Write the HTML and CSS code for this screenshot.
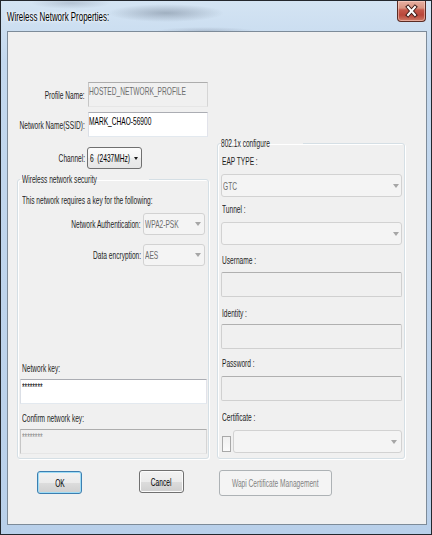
FILE: index.html
```html
<!DOCTYPE html>
<html>
<head>
<meta charset="utf-8">
<title>Wireless Network Properties</title>
<link rel="stylesheet" href="styles.css">
</head>
<body>
<div class="window">
  <div class="titlebar">
    <div class="title"><span class="t">Wireless Network Properties:</span></div>
    <div class="close">
      <svg width="27" height="20" viewBox="0 0 27 20">
        <path d="M10 6 L17 14 M17 6 L10 14" stroke="#3a1a16" stroke-width="4" stroke-linecap="square" fill="none"/>
        <path d="M10 6 L17 14 M17 6 L10 14" stroke="#ffffff" stroke-width="2" stroke-linecap="square" fill="none"/>
      </svg>
    </div>
  </div>
  <div class="client">
    <div class="main">
      <div class="leftcol">
        <div class="row row-profile">
          <div class="lbl"><span class="t">Profile Name:</span></div>
          <div class="edit edit-disabled field-top"><span class="t">HOSTED_NETWORK_PROFILE</span></div>
        </div>
        <div class="row row-ssid">
          <div class="lbl"><span class="t">Network Name(SSID):</span></div>
          <div class="edit field-top"><span class="t">MARK_CHAO-56900</span></div>
        </div>
        <div class="row row-channel">
          <div class="lbl"><span class="t">Channel:</span></div>
          <div class="combo combo-channel"><span class="t">6&nbsp;&nbsp;(2437MHz)</span><span class="arrow"></span></div>
        </div>
        <fieldset class="group group-sec">
          <legend><span class="t">Wireless network security</span></legend>
          <div class="note"><span class="t">This network requires a key for the following:</span></div>
          <div class="row row-auth">
            <div class="lbl lbl-wide"><span class="t">Network Authentication:</span></div>
            <div class="combo combo-disabled combo-small"><span class="t">WPA2-PSK</span><span class="arrow"></span></div>
          </div>
          <div class="row row-enc">
            <div class="lbl lbl-wide"><span class="t">Data encryption:</span></div>
            <div class="combo combo-disabled combo-small"><span class="t">AES</span><span class="arrow"></span></div>
          </div>
          <div class="text-lbl key-lbl"><span class="t">Network key:</span></div>
          <div class="edit key-edit"><span class="t">********</span></div>
          <div class="text-lbl confirm-lbl"><span class="t">Confirm network key:</span></div>
          <div class="edit edit-disabled key-edit confirm-edit"><span class="t">********</span></div>
        </fieldset>
      </div>
      <div class="rightcol">
        <fieldset class="group group-8021x">
          <legend><span class="t">802.1x configure</span></legend>
          <div class="text-lbl eap-lbl"><span class="t">EAP TYPE :</span></div>
          <div class="combo combo-disabled combo-wide eap-combo"><span class="t">GTC</span><span class="arrow"></span></div>
          <div class="text-lbl tunnel-lbl"><span class="t">Tunnel :</span></div>
          <div class="combo combo-disabled combo-wide tunnel-combo"><span class="t"></span><span class="arrow"></span></div>
          <div class="text-lbl user-lbl"><span class="t">Username :</span></div>
          <div class="edit edit-disabled r-edit user-edit"></div>
          <div class="text-lbl id-lbl"><span class="t">Identity :</span></div>
          <div class="edit edit-disabled r-edit id-edit"></div>
          <div class="text-lbl pw-lbl"><span class="t">Password :</span></div>
          <div class="edit edit-disabled r-edit pw-edit"></div>
          <div class="text-lbl cert-lbl"><span class="t">Certificate :</span></div>
          <div class="row cert-row">
            <div class="checkbox"></div>
            <div class="combo combo-disabled cert-combo"><span class="t"></span><span class="arrow"></span></div>
          </div>
        </fieldset>
      </div>
    </div>
    <div class="buttons">
      <div class="btn btn-ok"><span class="t">OK</span></div>
      <div class="btn btn-cancel"><span class="t">Cancel</span></div>
      <div class="btn btn-disabled btn-wapi"><span class="t">Wapi Certificate Management</span></div>
    </div>
  </div>
</div>
</body>
</html>
```

FILE: styles.css
```css
* { box-sizing: border-box; }
html, body { margin: 0; padding: 0; }
body {
  width: 432px;
  height: 535px;
  overflow: hidden;
  font-family: "Liberation Sans", Arial, sans-serif;
  font-size: 11px;
  line-height: 12px;
  color: #1e1e1e;
  background: #1c1c1c;
}

.t {
  display: inline-block;
  white-space: nowrap;
  transform: scaleX(0.6);
  transform-origin: 0 50%;
}

.window {
  width: 432px;
  height: 535px;
  border: 1px solid #23272d;
  background: linear-gradient(to bottom, #d4e4f3 0, #c3d8ee 60px, #b9d0ea 100%);
  display: flex;
  flex-direction: column;
}

.titlebar {
  height: 30px;
  flex: none;
  display: flex;
  justify-content: space-between;
  align-items: flex-start;
  background:
    radial-gradient(ellipse 58px 9px at 165px 12px, rgba(70, 82, 100, 0.35), rgba(70, 82, 100, 0) 100%),
    radial-gradient(ellipse 40px 6px at 70px 2px, rgba(90, 100, 120, 0.25), rgba(90, 100, 120, 0) 100%),
    radial-gradient(ellipse 50px 4px at 205px 30px, rgba(90, 100, 120, 0.25), rgba(90, 100, 120, 0) 100%);
}
.title {
  padding: 10px 0 0 6px;
  font-size: 12px;
  line-height: 13px;
  color: #000;
}
.title .t {
  transform: scaleX(0.66);
  text-shadow: 0 0 4px #fff, 0 0 7px #fff;
}
.close {
  width: 29px;
  height: 21px;
  margin-right: 5px;
  border: 1px solid #5a2b23;
  border-top: none;
  border-radius: 0 0 4px 4px;
  background: linear-gradient(to bottom, #e7b0a2 0, #d99583 35%, #c4584a 45%, #b9473a 70%, #cf7a66 100%);
  box-shadow: inset 0 0 0 1px rgba(255, 220, 210, 0.5);
}
.close svg { display: block; }

.client {
  height: 494px;
  margin: 0 4px 0 6px;
  border: 1px solid #7d8b99;
  background: #f0f0f0;
  padding-left: 9px;
  flex: none;
}

.main {
  display: flex;
  gap: 8px;
  align-items: flex-start;
}
.leftcol {
  width: 192px;
  flex: none;
  padding-top: 50px;
}
.rightcol {
  width: 188px;
  flex: none;
  padding-top: 106px;
}

.row {
  display: flex;
  align-items: center;
}
.lbl {
  width: 68px;
  flex: none;
  display: flex;
  justify-content: flex-end;
}
.lbl .t { transform-origin: 100% 50%; }
.lbl-wide { width: 121px; }

.edit {
  height: 25px;
  background: #fff;
  border: 1px solid #e2e3ea;
  border-top-color: #abadb3;
  border-left-color: #dbdfe6;
  border-bottom-color: #e3e9ef;
  padding: 2px 0 0 0;
  overflow: visible;
  color: #000;
}
.edit-disabled {
  background: #f0f0f0;
  color: #6d6d6d;
  border-color: #d5d5d5;
  border-top-color: #adadad;
  border-left-color: #c6c6c6;
  border-bottom-color: #e6e6e6;
}
.field-top {
  width: 120px;
  margin-left: 3px;
}

.row-profile { height: 25px; }
.row-ssid { height: 25px; margin-top: 5px; }
.row-channel { height: 22px; margin-top: 10px; }

.combo {
  height: 22px;
  display: flex;
  align-items: center;
  border-radius: 3px;
}
.combo-channel {
  width: 55px;
  margin-left: 2px;
  border: 1px solid #707070;
  background: linear-gradient(to bottom, #fcfcfc 0, #f4f4f4 50%, #ececec 50%, #e6e6e6 100%);
  padding-left: 2px;
  color: #000;
}
.combo-channel .t { width: 44px; }
.arrow {
  flex: none;
  margin-left: auto;
  width: 0;
  height: 0;
  border-left: 3px solid transparent;
  border-right: 3px solid transparent;
  border-top: 4px solid #1a1a1a;
  margin-right: 3px;
}
.combo-channel .arrow {
  border-left-width: 2px;
  border-right-width: 2px;
  border-top-width: 3px;
  margin-right: 4px;
}
.combo-disabled {
  border: 1px solid #d2d2d2;
  background: #f4f4f4;
  color: #6d6d6d;
  padding-left: 1px;
}
.combo-disabled .arrow {
  border-top-color: #a6a6a6;
  margin-right: 3px;
}
.combo-small {
  width: 62px;
  margin-left: 2px;
}
.combo-small .t { width: 50px; }

.group {
  margin: 0;
  min-width: 0;
  border: 1px solid #d5dfe5;
  border-radius: 3px;
  box-shadow: inset 1px 1px 0 #fff, 1px 1px 0 #fff;
}
.group legend {
  padding: 0 2px;
  line-height: 11px;
  height: 11px;
}
.group-sec {
  width: 192px;
  margin-top: 5px;
  padding: 0 1px 4px 2px;
}
.group-8021x {
  width: 188px;
  padding: 0 2px 5px 3px;
}
.group-8021x legend { padding: 0 1px 0 0; }

.note { margin-top: 9px; height: 12px; padding-left: 2px; }
.row-auth { height: 22px; margin-top: 7px; }
.row-enc { height: 22px; margin-top: 9px; }

.text-lbl { height: 12px; padding-left: 2px; }
.key-lbl { margin-top: 96px; }
.key-edit { margin-top: 5px; width: 187px; padding: 1px 0 0 1px; }
.confirm-lbl { margin-top: 8px; }
.confirm-edit { color: #8a8a8a; }

.group-8021x .text-lbl { padding-left: 1px; }
.eap-lbl { margin-top: 6px; }
.combo-wide { width: 181px; height: 23px; }
.combo-wide .arrow { margin-right: 2px; }
.eap-combo { margin-top: 7px; }
.tunnel-lbl { margin-top: 6px; }
.tunnel-combo { margin-top: 7px; }
.user-lbl { margin-top: 9px; }
.r-edit {
  width: 181px;
  border-radius: 2px;
  border-color: #d0d0d0;
  border-top-color: #b0b0b0;
  background: #f0f0f0;
}
.user-edit { margin-top: 6px; }
.id-lbl { margin-top: 10px; }
.id-edit { margin-top: 5px; }
.pw-lbl { margin-top: 8px; }
.pw-edit { margin-top: 7px; }
.cert-lbl { margin-top: 10px; }
.cert-row {
  margin-top: 7px;
  height: 23px;
  align-items: flex-end;
}
.checkbox {
  width: 9px;
  height: 16px;
  margin: 0 2px 1px 1px;
  border: 1px solid #a8a8a8;
  background: linear-gradient(to bottom, #f0f0f0, #fafafa);
  flex: none;
}
.cert-combo {
  width: 169px;
  height: 23px;
}
.cert-combo .arrow { margin-right: 4px; }

.buttons {
  display: flex;
  align-items: flex-start;
  margin-top: 11px;
}
.btn {
  display: flex;
  align-items: center;
  justify-content: center;
  border: 1px solid #707070;
  border-radius: 3px;
  background: linear-gradient(to bottom, #f2f2f2 0, #ebebeb 50%, #dddddd 50%, #cfcfcf 100%);
  box-shadow: inset 0 0 0 1px #fbfbfb;
  color: #000;
}
.btn .t { transform-origin: 50% 50%; }
.btn-ok {
  width: 45px;
  height: 23px;
  margin: 1px 0 0 20px;
  border-color: #3c7fb1;
  box-shadow: inset 0 0 0 1px #9fdcf5;
}
.btn-cancel {
  width: 45px;
  height: 23px;
  margin-left: 57px;
}
.btn-disabled {
  background: #f4f4f4;
  border-color: #adb2b5;
  box-shadow: none;
  color: #838383;
}
.btn-wapi {
  width: 113px;
  height: 26px;
  margin-left: 35px;
}
```
